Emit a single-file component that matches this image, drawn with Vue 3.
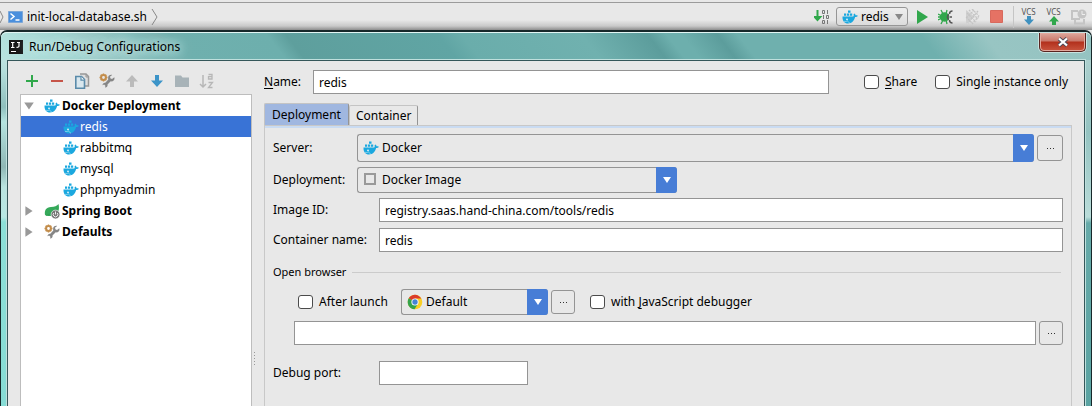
<script setup>
import { ref } from 'vue'

const dockerItems = ['redis', 'rabbitmq', 'mysql', 'phpmyadmin']
const selected = ref('redis')
const name = ref('redis')
const imageId = ref('registry.saas.hand-china.com/tools/redis')
const containerName = ref('redis')
const actions = [
  { id: 'add', label: 'Add' },
  { id: 'remove', label: 'Remove' },
  { id: 'copy', label: 'Copy' },
  { id: 'wrench', label: 'Edit defaults' },
  { id: 'up', label: 'Move up' },
  { id: 'down', label: 'Move down' },
  { id: 'folder', label: 'Create folder' },
  { id: 'sort', label: 'Sort' },
]
</script>

<template>
  <svg class="sprite" aria-hidden="true">
    <symbol id="docker" viewBox="0 0 16 16">
      <path fill="#1ba8df" d="M.5 7.500h10.800c.5-.6.6-1.300.3-2.200l.9-.9c.7.500 1 1.200 1 1.900.9-.1 1.600 0 2.300.4-.5 1-1.400 1.400-2.700 1.400C12 12 9.800 14.500 6 14.500 2.600 14.500.3 12.200.5 7.500z" />
      <path fill="#1ba8df" d="M2 4.500h2.200v2.200H2zM5 4.500h2.200v2.200H5zM8 4.500h2.200v2.200H8zM6 1.500h2.500v2.200H6z" />
      <circle cx="5" cy="10.300" r=".9" fill="#eaf6fb" />
      <path d="M2 12.300c1.500.4 2.600.2 3.600-.5.7 1.400 1.300 2 2.400 2.400" fill="none" stroke="#bfe6f5" stroke-width=".6" />
    </symbol>
    <symbol id="wrench" viewBox="0 0 16 16">
      <path d="M15.300 4.300l-2.300 1.600-1.700-.6-.2-1.800 2.100-1.600c-2.400-.5-4.400 1.100-4.100 3.500l.2 1.200-3 3.200c-1.500-.2-2.800.9-2.800 2.400l1.600-.6 1.300 1.100-.3 1.800c1.800.2 2.800-1.300 2.400-2.900l3.200-3.300c2.500.5 4.400-1.400 3.600-4z" fill="#868686" />
      <circle cx="4.500" cy="4.500" r="2.400" fill="none" stroke="#c38d4b" stroke-width="2" />
      <path d="M4.500.5v1.500M4.500 7v1.500M.5 4.500h1.500M7 4.500h1.500M1.700 1.700l1 1M6.300 6.300l1 1M7.300 1.700l-1 1M1.700 7.300l1-1" stroke="#c38d4b" stroke-width="1.400" />
    </symbol>
    <symbol id="spring" viewBox="0 0 16 16">
      <path fill="#35a95a" d="M14.500 1c.9 4 .8 8-3 10.500-3.300 2-8 2-10.500.5C.3 7 2 4.500 7 4c3.500-.3 6-.8 7.500-3z" />
      <path d="M2 12.500c4-1 8-3 11-7" fill="none" stroke="#2d9850" stroke-width=".7" />
      <circle cx="11.500" cy="11.500" r="4.400" fill="#777" stroke="#fff" stroke-width=".6" />
      <path d="M9.800 10a2.300 2.300 0 1 0 3.400 0M11.500 8.500v3" fill="none" stroke="#eee" stroke-width="1" />
    </symbol>
    <symbol id="add" viewBox="0 0 16 16"><path d="M8 2v12M2 8h12" stroke="#30a84b" stroke-width="2" /></symbol>
    <symbol id="remove" viewBox="0 0 16 16"><path d="M2 8h12" stroke="#c65549" stroke-width="2" /></symbol>
    <symbol id="copy" viewBox="0 0 16 16">
      <path d="M6 1h6l2.500 2.500V13H11" fill="#dedede" stroke="#979797" stroke-width="1.500" />
      <path d="M12 1v3h3" fill="none" stroke="#979797" />
      <path d="M1.800 3.500h5.700l3 3v8.700H1.800z" fill="#d9e7ee" stroke="#5a8baa" stroke-width="1.600" />
      <path d="M7 3.500v3.700h3.500" fill="#fff" stroke="#5a8baa" stroke-width="1.200" />
    </symbol>
    <symbol id="up" viewBox="0 0 16 16"><path d="M8 2l6 6.500h-4V14H6V8.500H2z" fill="#bbb" /></symbol>
    <symbol id="down" viewBox="0 0 16 16"><path d="M8 14l6-6.500h-4V2H6v5.500H2z" fill="#3c94c8" /></symbol>
    <symbol id="folder" viewBox="0 0 16 16"><path d="M1 2.500h6l1.500 2H15V14H1z" fill="#a8b3b8" /></symbol>
    <symbol id="sort" viewBox="0 0 16 16">
      <path d="M4 2v12M1 11l3 3 3-3" fill="none" stroke="#b7b7b7" stroke-width="1.500" />
      <path d="M9.500 1.500H13V6H9.500V3.700H13M9.500 9.500h4l-4 5h4" fill="none" stroke="#b7b7b7" stroke-width="1.300" />
    </symbol>
    <symbol id="chrome" viewBox="0 0 16 16">
      <circle cx="8" cy="8" r="7.300" fill="#f9cf25" />
      <path d="M8 8L1.700 4.300A7.300 7.300 0 0 1 14.300 4.600H8z" fill="#db3b2b" />
      <path d="M1.700 4.300A7.300 7.300 0 0 0 7.500 15.300L11 9.800 8 8z" fill="#35a34b" />
      <circle cx="8" cy="8" r="3.600" fill="#fff" /><circle cx="8" cy="8" r="2.700" fill="#4684d5" />
    </symbol>
    <symbol id="triangle" viewBox="0 0 10 10"><path d="M1 2h8L5 8z" fill="currentColor" /></symbol>
  </svg>

  <div class="screen">
    <header class="toolbar">
      <nav class="crumbs">
        <svg width="4" height="18" viewBox="0 0 4 18"><path d="M0 3l3 6-3 6" fill="none" stroke="#888" /></svg>
        <svg width="15" height="12" viewBox="0 0 15 12">
          <path d="M.5.5h14v11H.5z" fill="#4a8fdd" stroke="#7da7d6" />
          <path d="M2.500 2.500l3.500 3-3.500 3M7.500 9h4" fill="none" stroke="#fff" stroke-width="1.500" />
        </svg>
        <a href="#">init-local-database.sh</a>
        <svg width="8" height="18" viewBox="0 0 8 18"><path d="M1 1l5 8-5 8" fill="none" stroke="#888" /></svg>
      </nav>
      <div class="tools">
        <button class="tool" aria-label="Make project">
          <svg width="16" height="16" viewBox="0 0 16 16">
            <path d="M3.500 1v10M.8 8l2.700 3 2.700-3z" fill="#30a84b" stroke="#30a84b" stroke-width="2" />
            <g fill="none" stroke="#777"><path d="M8.500 1.500h2v3h-2zM13.500 1v4M9.500 6v4M12.500 6.500h2v3h-2zM8.500 11.500h2v3h-2zM13.500 11v4" /></g>
          </svg>
        </button>
        <div class="runbox">
          <svg class="icon"><use href="#docker" /></svg>
          <select aria-label="Run configuration"><option>redis</option></select>
          <svg class="tri"><use href="#triangle" /></svg>
        </div>
        <button class="tool" aria-label="Run"><svg width="12" height="14" viewBox="0 0 12 14"><path d="M1 0l11 7-11 7z" fill="#31a74c" /></svg></button>
        <button class="tool" aria-label="Debug">
          <svg width="16" height="16" viewBox="0 0 16 16">
            <path d="M3 1l2 4M9 1L8 5M3 15l2-4M9 15l-1-4M0 5l4 2M0 11l4-2M0 8h3" stroke="#31a74c" stroke-width="1.300" />
            <ellipse cx="6.500" cy="8" rx="4.700" ry="4.700" fill="#31a74c" />
            <path d="M14.500 2c-2 0-3 1-3 3M14.500 14c-2 0-3-1-3-3M11 5.500a2.800 2.800 0 0 0 0 5M11.500 8H14" fill="none" stroke="#555" stroke-width="1.500" />
          </svg>
        </button>
        <button class="tool" aria-label="Run with coverage">
          <svg width="16" height="16" viewBox="0 0 16 16">
            <path d="M2 1l9 7-9 7z" fill="#d0d0d0" />
            <path d="M5 1l9 9M8 0l7 7M3 4l9 9M2 8l7 7M14 2L4 14M10 1L2 9M15 7l-7 8" stroke="#c4c4c4" stroke-width="1.300" stroke-dasharray="2 1" />
          </svg>
        </button>
        <button class="tool" aria-label="Stop"><svg width="13" height="13"><path d="M.5.5h12v12H.5z" fill="#e57264" stroke="#d8695c" /></svg></button>
        <span class="sep"></span>
        <button class="tool vcs" aria-label="Update project"><span>VCS</span><svg width="12" height="9" viewBox="0 0 12 9"><path d="M4 0h4v3.500h3L6 9 1 3.500h3z" fill="#3f91bf" /></svg></button>
        <button class="tool vcs" aria-label="Commit changes"><span>VCS</span><svg width="12" height="9" viewBox="0 0 12 9"><path d="M4 9h4V5.500h3L6 0 1 5.500h3z" fill="#31a74c" /></svg></button>
        <button class="tool" aria-label="History">
          <svg width="16" height="16" viewBox="0 0 16 16">
            <path d="M7 2H1v8h8M4 11v3.500h9V10" fill="none" stroke="#c4c4c4" stroke-width="2" />
            <circle cx="11" cy="5" r="4.500" fill="#c4c4c4" /><path d="M11 2v3.500h3" fill="none" stroke="#eee" />
          </svg>
        </button>
      </div>
    </header>

    <main class="dialog">
      <div class="titlebar">
        <svg width="14" height="14" viewBox="0 0 14 14">
          <path d="M0 0h14v14H0z" fill="#171717" />
          <path d="M2 2.500h3.500M3.700 2.500V7M2 7.500h3.500M8 2.500h3M10 2.500V6q0 1.500-2.500 1.300M2 11.500h5" fill="none" stroke="#fff" stroke-width="1.200" />
        </svg>
        <h1>Run/Debug Configurations</h1>
        <button class="close" aria-label="Close">
          <svg width="12" height="10" viewBox="0 0 12 10">
            <path d="M2 1.500l8 7M10 1.500l-8 7" stroke="#4a4a58" stroke-width="4" />
            <path d="M2 1.500l8 7M10 1.500l-8 7" stroke="#fff" stroke-width="2.300" />
          </svg>
        </button>
      </div>

      <div class="body">
        <aside class="side">
          <div class="actions">
            <button v-for="a in actions" :key="a.id" :aria-label="a.label"><svg class="icon"><use :href="'#' + a.id" /></svg></button>
          </div>
          <ul class="tree">
            <li><button class="node group"><svg class="tri"><use href="#triangle" /></svg><svg class="icon"><use href="#docker" /></svg>Docker Deployment</button></li>
            <li v-for="d in dockerItems" :key="d">
              <button class="node leaf" :class="{ on: selected === d }" @click="selected = d"><svg class="icon"><use href="#docker" /></svg>{{ d }}</button>
            </li>
            <li><button class="node group closed"><svg class="tri"><use href="#triangle" /></svg><svg class="icon"><use href="#spring" /></svg>Spring Boot</button></li>
            <li><button class="node group closed"><svg class="tri"><use href="#triangle" /></svg><svg class="icon"><use href="#wrench" /></svg>Defaults</button></li>
          </ul>
        </aside>
        <div class="splitter"><i></i></div>

        <section class="config">
          <div class="namerow">
            <label for="name"><u>N</u>ame:</label>
            <input id="name" v-model="name" class="text" type="text">
            <label class="check share"><input type="checkbox"><span><u>S</u>hare</span></label>
            <label class="check"><input type="checkbox"><span>Single <u>i</u>nstance only</span></label>
          </div>
          <div class="tabs" role="tablist">
            <button class="tab active" role="tab" aria-selected="true">Deployment</button>
            <button class="tab" role="tab" aria-selected="false">Container</button>
          </div>
          <div class="panel">
            <div class="row">
              <label class="short" for="server">Server:</label>
              <div class="combo tall grow">
                <svg class="icon"><use href="#docker" /></svg>
                <select id="server"><option>Docker</option></select>
                <span class="arrow"><svg class="tri"><use href="#triangle" /></svg></span>
              </div>
              <button class="more wide" aria-label="Server settings"><i></i><i></i><i></i></button>
            </div>
            <div class="row">
              <label class="short" for="deployment">Deployment:</label>
              <div class="combo deploy">
                <svg class="icon" viewBox="0 0 16 16"><path d="M2 2h10v10H2z" fill="none" stroke="#999" stroke-width="2" /></svg>
                <select id="deployment"><option>Docker Image</option></select>
                <span class="arrow"><svg class="tri"><use href="#triangle" /></svg></span>
              </div>
            </div>
            <div class="row">
              <label class="long" for="image">Image ID:</label>
              <input id="image" v-model="imageId" class="text" type="text">
            </div>
            <div class="row last">
              <label class="long" for="container">Container name:</label>
              <input id="container" v-model="containerName" class="text" type="text">
            </div>
            <div class="group-title"><h2>Open browser</h2><hr></div>
            <div class="row launch">
              <label class="check"><input type="checkbox"><span>After launch</span></label>
              <div class="combo browser">
                <svg class="icon"><use href="#chrome" /></svg>
                <select aria-label="Browser"><option>Default</option></select>
                <span class="arrow"><svg class="tri"><use href="#triangle" /></svg></span>
              </div>
              <button class="more" aria-label="Browser settings"><i></i><i></i><i></i></button>
              <label class="check js"><input type="checkbox"><span>with <u>J</u>avaScript debugger</span></label>
            </div>
            <div class="row url">
              <input class="text" type="text" aria-label="Page address">
              <button class="more" aria-label="Browse"><i></i><i></i><i></i></button>
            </div>
            <div class="row">
              <label class="long" for="port">Debug port:</label>
              <input id="port" class="text port" type="text">
            </div>
          </div>
        </section>
      </div>
    </main>
  </div>
</template>

<style>
body { background: #e8e8e8; overflow: hidden; }
</style>

<style scoped>
* { box-sizing: border-box; }
.sprite { position: absolute; width: 0; height: 0; }
.screen {
  display: flex; flex-direction: column; min-height: 100vh;
  background: #e8e8e8; color: #000;
  font: 12px/16px "Noto Sans", "Open Sans", sans-serif;
}
button, input, select { font: inherit; color: inherit; margin: 0; padding: 0; }
button { border: 0; background: none; }
svg { display: block; flex: none; }
.icon { width: 16px; height: 16px; }
.tri { width: 10px; height: 10px; }
u { text-underline-offset: 2px; }

.toolbar {
  display: flex; justify-content: space-between; align-items: center;
  height: 30px; padding: 3px 5px 0 0;
  background: linear-gradient(#9b9b9b, #9b9b9b) 0 2px / 100% 1px no-repeat,
    linear-gradient(#e8e8e8 20px, #c9c9c9 26px, #8d8d8d 30px);
}
.crumbs, .tools { display: flex; align-items: center; }
.crumbs { gap: 4px; }
.crumbs a { color: #000; text-decoration: none; }
.tools { gap: 10px; }
.tool { display: flex; align-items: center; justify-content: center; height: 18px; }
.runbox {
  display: flex; align-items: center; width: 72px; height: 19px; padding: 0 3px 0 5px; margin: 0 -2px 0 -4px;
  border: 1px solid #969696; border-radius: 3px; background: linear-gradient(#eee, #dcdcdc);
}
.runbox select { flex: 1; width: 0; padding-left: 3px; }
.runbox .tri { color: #888; }
select { appearance: none; border: 0; background: transparent; outline: 0; }
.sep { width: 1px; height: 22px; margin-right: -3px; background: #c5c5c5; }
.vcs { flex-direction: column; width: 15px; color: #555; }
.vcs span { font-size: 8px; line-height: 8px; }

.dialog {
  flex: 1; display: flex; flex-direction: column;
  border: solid #17282a; border-width: 2px 1px 0; border-radius: 7px 7px 0 0;
  background:
    linear-gradient(#d0ece9, #b4dedb 40px, #8fbfbd 75px, #b5e4e0 90px, #8fb7b5 135px, #b9e3df 155px, #b8e8e4 185px, #8cdfd7 190px, #86dcd5) left / 50% 100% no-repeat,
    linear-gradient(#b4d4d2, #94c3c1 100px, #b9dcd9 185px, #66aaa9 191px, #5aa3a2) right / 50% 100% no-repeat;
}
.titlebar {
  display: flex; align-items: center; height: 28px; padding: 0 5px 0 8px; gap: 6px;
  border-top: 1px solid #e2f6f4; border-radius: 6px 6px 0 0;
  background: linear-gradient(52deg, #b9e5e1, #a0d5d1 60px, #9ccbc8 80px, #6fb0ae 150px, #6dafad 225px, #5e9f9d 240px, #60a5a4 360px, #6aadab 378px, #70b1af 473px, #6dafad 560px, #6dafad 700px, #6fb0ae 740px, #98c5c3 790px, #94c3c1);
  background: linear-gradient(52deg, #b9e5e1, #a0d5d1 60px, #9ccbc8 80px, #6fb0ae 150px, #6dafad 225px, #5e9f9d 240px, #60a5a4 360px, #6aadab 378px, #70b1af 473px, #5c9d9c 525px, #6dafad 540px, #6dafad 552px, #5c9d9c 580px, #6fb0ae 596px, #6fb0ae 740px, #98c5c3 790px, #94c3c1);
}
.titlebar h1 {
  flex: 1; margin: 0; font-size: 12px; font-weight: 400; line-height: 16px;
  text-shadow: 0 0 8px #d8efed, 0 0 12px #c6e6e4, 0 0 16px #c6e6e4;
}
.close {
  align-self: flex-start; display: flex; align-items: center; justify-content: center; width: 47px; height: 19px;
  border: 1px solid #5a2420; border-top: 0; border-radius: 0 0 5px 5px;
  background: linear-gradient(#dda79c, #c9786a 8px, #b2301c 9px, #c9553f);
  box-shadow: 0 0 0 1px #c7e2e0, inset 0 0 0 1px #e2a99e;
}
.body {
  flex: 1; display: flex; margin: 0 6px; padding: 0 12px;
  background: #e8e8e8; border: solid #35575a; border-width: 1px 1px 0; box-shadow: 0 0 0 1px #bfe0dd;
}
.side { display: flex; flex-direction: column; width: 232px; }
.actions { display: flex; gap: 9px; height: 33px; padding: 6px 0 0 4px; align-items: center; }
.tree { flex: 1; margin: 0; padding: 0; list-style: none; background: #fff; border: 1px solid #bdbdbd; border-bottom: 0; }
.node { display: flex; align-items: center; width: 100%; height: 21px; text-align: left; }
.group { padding-left: 2px; gap: 9px; font-weight: 700; }
.group .icon { margin: 0 -7px 0 0; }
.group .tri { width: 12px; height: 12px; color: #999; }
.closed .tri { transform: rotate(-90deg); }
.leaf { padding-left: 42px; gap: 1px; }
.on { background: #3973d6; color: #fff; }
.splitter { width: 12px; padding: 290px 7px 0 1px; }
.splitter i { display: block; height: 15px; background: radial-gradient(#999 1px, transparent 1px) 0 0 / 3px 3px; }

.config { flex: 1; display: flex; flex-direction: column; }
.namerow { display: flex; align-items: center; padding-top: 9px; padding-right: 4px; }
.namerow > label:first-child { width: 49px; }
.text {
  flex: 1; min-width: 0; height: 24px; padding: 0 5px; border: 1px solid #949494;
  background: #fff; outline: 0; border-radius: 0;
}
.check { display: flex; align-items: center; gap: 6px; }
.check input { appearance: none; width: 15px; height: 14px; border: 1px solid #4b4b4b; border-radius: 3px; background: #fff; }
.share { margin: 0 18px 0 35px; }
.tabs { display: flex; align-items: flex-end; height: 31px; padding-top: 9px; }
.tab { height: 20px; padding: 0 6px; border: 1px solid #c4c4c4; border-right-color: #949494; border-bottom: 0; border-radius: 2px 2px 0 0; }
.active { height: 22px; padding: 0 7px; background: #a0b7e0; }
.panel {
  flex: 1; padding: 8px 8px 0; display: flex; flex-direction: column; gap: 5px;
  border: solid #c8c8c8; border-width: 1px 1px 0; box-shadow: inset 0 2px #c9dbf2;
}
.row { display: flex; align-items: center; }
.short { width: 84px; }
.long { width: 106px; }
.last { margin-top: 1px; }
.combo { display: flex; align-items: center; height: 26px; border: 1px solid #949494; border-right: 0; border-radius: 3px; padding-left: 5px; }
.combo select { flex: 1; min-width: 0; height: 20px; padding-left: 3px; }
.arrow { display: flex; align-items: center; justify-content: center; align-self: stretch; width: 21px; margin: -1px 0; border-radius: 0 3px 3px 0; background: #477dd6; color: #fff; }
.tall { height: 28px; }
.grow { flex: 1; }
.deploy { width: 320px; }
.browser { width: 147px; }
.more { display: flex; align-items: center; justify-content: center; gap: 2px; width: 24px; height: 24px; margin-left: 3px; border: 1px solid #949494; border-radius: 3px; }
.more i { width: 1px; height: 1px; background: #333; }
.wide { width: 26px; height: 26px; }
.group-title { display: flex; align-items: center; gap: 6px; margin: 7px 2px 0 0; }
.group-title h2 { margin: 0; font-size: 11px; font-weight: 400; line-height: 16px; }
.group-title hr { flex: 1; margin: 0; border: 0; border-top: 1px solid #cbcbcb; }
.launch { margin-top: 4px; padding-left: 25px; }
.launch .check:first-child { width: 103px; }
.js { margin-left: 15px; }
.url { padding-left: 21px; margin: 1px 0 11px; }
.port { flex: none; width: 149px; }
</style>
